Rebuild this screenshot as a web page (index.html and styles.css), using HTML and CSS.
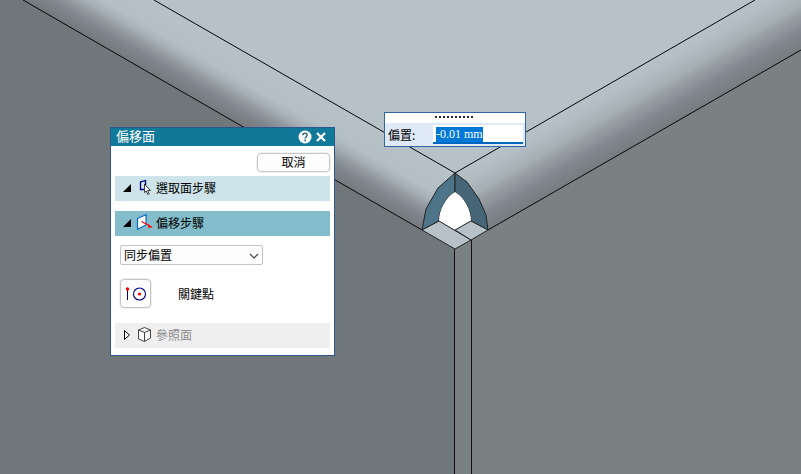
FILE: index.html
```html
<!DOCTYPE html>
<html lang="zh-Hant">
<head>
<meta charset="utf-8">
<meta name="viewport" content="width=device-width, initial-scale=1">
<title>偏移面</title>
<link rel="stylesheet" href="styles.css">
</head>
<body>
<main class="viewport">
  <svg class="model" viewBox="0 0 801 474" preserveAspectRatio="xMidYMid slice" aria-hidden="true">
    <defs>
      <linearGradient id="round-left" gradientUnits="userSpaceOnUse" x1="155" y1="0" x2="122" y2="57">
        <stop offset="0" stop-color="#b7c2c8"/>
        <stop offset=".4" stop-color="#b4bfc5"/>
        <stop offset=".54" stop-color="#a5afb5"/>
        <stop offset=".66" stop-color="#92999f"/>
        <stop offset=".8" stop-color="#80868d"/>
        <stop offset="1" stop-color="#73797c"/>
      </linearGradient>
      <linearGradient id="round-right" gradientUnits="userSpaceOnUse" x1="755" y1="0" x2="788" y2="57">
        <stop offset="0" stop-color="#b7c2c8"/>
        <stop offset=".18" stop-color="#b2bdc3"/>
        <stop offset=".42" stop-color="#a4aeb3"/>
        <stop offset=".5" stop-color="#9aa2a8"/>
        <stop offset=".77" stop-color="#80868d"/>
        <stop offset="1" stop-color="#767d80"/>
      </linearGradient>
    </defs>
    <rect width="801" height="474" fill="#b7c2c8"/>
    <path d="M0 0H23L422 230L455 249V474H0Z" fill="#70777a"/>
    <path d="M801 50L488 230L455 249V474H801Z" fill="#7a8183"/>
    <path d="M23 0H154L455 173L422 230Z" fill="url(#round-left)"/>
    <path d="M755 0H801V50L488 230L455 173Z" fill="url(#round-right)"/>
    <g stroke="#202326" stroke-width="1" stroke-linejoin="round">
      <path d="M23 0L422 230M154 0L455 173L755 0M801 50L488 230" fill="none" stroke="#050505"/>
      <path d="M455 173L438 188L426 209L422 230L439 221C439 210 446 197 455 192Z" fill="#4e7488"/>
      <path d="M455 173L467 182L479 199L486 215L488 230L471 221C471 210 464 197 455 192Z" fill="#466677"/>
      <path d="M455 192C446 197 439 210 439 221L455 230L471 221C471 210 464 197 455 192Z" fill="#fff" stroke="none"/>
      <path d="M439 221L422 230L455 249L471 240Z" fill="#b7c2c8"/>
      <path d="M471 221L488 230L471 240L455 230Z" fill="#b7c2c8"/>
      <path d="M454.500 249V474M471.500 240V474" fill="none" stroke="#111"/>
    </g>
  </svg>

  <section class="dialog" aria-labelledby="dialog-title">
    <header class="titlebar">
      <h1 id="dialog-title">偏移面</h1>
      <button class="title-button" type="button" aria-label="說明">
        <svg width="14" height="14" viewBox="0 0 14 14"><circle cx="7" cy="7" r="6.5" fill="#fff"/><path d="M4.8 5.2C4.8 2.5 9.3 2.6 9.2 5.1C9.2 6.6 7.2 6.8 7.1 8.5" fill="none" stroke="#30657d" stroke-width="1.5"/><rect x="6.3" y="9.5" width="1.7" height="1.7" fill="#30657d"/></svg>
      </button>
      <button class="title-button" type="button" aria-label="關閉">
        <svg width="14" height="14" viewBox="0 0 14 14"><path d="M3 3L11 11M11 3L3 11" stroke="#fff" stroke-width="2.2"/></svg>
      </button>
    </header>
    <div class="actions"><button class="cancel" type="button">取消</button></div>
    <button class="step" type="button" aria-expanded="true">
      <svg width="8" height="8" viewBox="0 0 8 8"><path d="M8 0V8H0Z"/></svg>
      <svg width="17" height="18" viewBox="0 0 17 18"><path d="M9.500 10V1.500L4.500 3V10.500H8" fill="none" stroke="#00007c" stroke-width="1.300"/><path d="M8.500 5V13.500L10.300 12L11.800 15.500L13.200 14.800L11.700 11.500H14.500Z" fill="#fff" stroke="#111" stroke-width=".8"/></svg>
      <span>選取面步驟</span>
    </button>
    <button class="step step-current" type="button" aria-expanded="true">
      <svg width="8" height="8" viewBox="0 0 8 8"><path d="M8 0V8H0Z"/></svg>
      <svg width="17" height="18" viewBox="0 0 17 18"><path d="M1.500 4.500L10 .800V11L1.500 15.200Z" fill="#fff" stroke="#0868c5" stroke-width="1.200"/><path d="M5.500 7.500L13 11.500" stroke="red" stroke-width="1.200"/><path d="M12.800 10.200L16.800 13.500L12 13.800Z" fill="red"/></svg>
      <span>偏移步驟</span>
    </button>
    <div class="options">
      <div class="select-wrap">
        <select aria-label="偏置類型"><option>同步偏置</option></select>
        <svg class="chevron" width="10" height="6" viewBox="0 0 10 6"><path d="M1 1L5 5L9 1" fill="none" stroke="#444" stroke-width="1.200"/></svg>
      </div>
      <div class="keypoint">
        <button class="key-button" id="keypoint" type="button" aria-labelledby="key-label">
          <svg width="24" height="18" viewBox="0 0 24 18"><path d="M3.500 5V15" stroke="#000080"/><circle cx="3.500" cy="4" r="1.700" fill="red"/><circle cx="15.500" cy="9" r="6" fill="none" stroke="#00008b" stroke-width="1.100"/><circle cx="15.500" cy="9" r="1.600" fill="red"/></svg>
        </button>
        <label id="key-label" for="keypoint">關鍵點</label>
      </div>
    </div>
    <button class="step step-disabled" type="button" aria-expanded="false">
      <svg width="8" height="12" viewBox="0 0 8 12"><path d="M1.500 1.500L6.500 6L1.500 10.500Z" fill="#fff" stroke="#000"/></svg>
      <svg width="17" height="18" viewBox="0 0 17 18"><path d="M2.500 4L8.500 1.500L14.500 4V12L8.500 15.500L2.500 13ZM2.500 4L8.500 6.500L14.500 4M8.500 6.500V15.500" fill="#fafafa" stroke="#444" stroke-linejoin="round"/></svg>
      <span>參照面</span>
    </button>
  </section>

  <form class="value-bar">
    <div class="grip"><svg width="40" height="2" viewBox="0 0 40 2"><path d="M0 1H40" stroke="#20263c" stroke-width="2" stroke-dasharray="2 2"/></svg></div>
    <div class="value-row">
      <label for="offset">偏置:</label>
      <input id="offset" type="text" value="-0.01 mm">
    </div>
  </form>
</main>
<script src="script.js"></script>
</body>
</html>
```
FILE: styles.css
```css
* {
  box-sizing: border-box;
}

body {
  margin: 0;
  color: #000;
  font: 12px/16px "Noto Sans CJK TC", sans-serif;
}

button,
select {
  font: inherit;
  color: inherit;
}

svg {
  display: block;
  flex: none;
}

.viewport {
  position: relative;
  height: 100vh;
  overflow: hidden;
}

.model {
  width: 100%;
  height: 100%;
}

.dialog {
  position: absolute;
  left: 110px;
  top: 127px;
  width: 225px;
  padding-bottom: 7px;
  background: #fff;
  border: 1px solid #2d5790;
}

.titlebar {
  display: flex;
  align-items: center;
  gap: 2px;
  height: 18px;
  padding: 0 6px 0 5px;
  background: #107899;
  color: #fff;
}

.titlebar h1 {
  flex: 1;
  margin: 0;
  padding-bottom: 2px;
  font-size: 13px;
  font-weight: 400;
}

.title-button {
  padding: 0;
  border: 0;
  background: none;
}

.actions {
  display: flex;
  justify-content: flex-end;
  padding: 7px 4px 4px;
}

.cancel {
  width: 73px;
  height: 19px;
  padding: 0 0 2px;
  line-height: 15px;
  background: #fdfdfd;
  border: 1px solid #c8c8c8;
  border-radius: 4px;
  box-shadow: 0 0 0 1px #f0f0f0;
}

.step {
  display: flex;
  align-items: center;
  width: calc(100% - 8px);
  height: 25px;
  margin: 0 4px 10px;
  padding: 0 8px 2px;
  border: 0;
  background: #cde5ea;
  text-align: left;
}

.step svg + svg {
  margin: 0 3px 0 5px;
}

.step-current {
  margin-bottom: 9px;
  background: #83bdcb;
}

.step-disabled {
  margin-bottom: 0;
  background: #efefef;
}

.step-disabled span {
  color: #8c8c8c;
}

.options {
  padding: 0 9px 15px;
}

.select-wrap {
  position: relative;
  width: 143px;
}

select {
  display: block;
  width: 100%;
  height: 20px;
  padding: 0 3px;
  appearance: none;
  background: #fdfdfd;
  border: 1px solid #c4c4c4;
  border-radius: 2px;
}

.chevron {
  position: absolute;
  right: 4px;
  top: 8px;
  pointer-events: none;
}

.keypoint {
  display: flex;
  align-items: center;
  gap: 27px;
  margin-top: 14px;
}

.key-button {
  width: 31px;
  height: 29px;
  padding: 0 3px;
  background: #fdfdfd;
  border: 1px solid #c4c4c4;
  border-radius: 4px;
  box-shadow: 0 0 0 1px #f0f0f0;
}

.value-bar {
  position: absolute;
  left: 384px;
  top: 112px;
  width: 142px;
  background: #e0e9f8;
  border: 1px solid #3563a7;
}

.grip {
  display: flex;
  justify-content: center;
  padding: 3px 0 5px;
  background: #fff;
}

.value-row {
  display: flex;
  align-items: center;
  height: 23px;
  padding: 0 2px 0 3px;
}

.value-row label {
  flex: 1;
}

.value-row input {
  width: 90px;
  height: 19px;
  padding: 2px 3px 0;
  border: 0;
  border-bottom: 2px solid #0067c0;
  background: #fff;
  font: 12px/14px "Liberation Serif", serif;
  outline: none;
}

.value-row input::selection {
  background: #0078d7;
  color: #fff;
}
```
FILE: script.js
```js
const offset = document.getElementById("offset");
offset.focus();
offset.select();
```
